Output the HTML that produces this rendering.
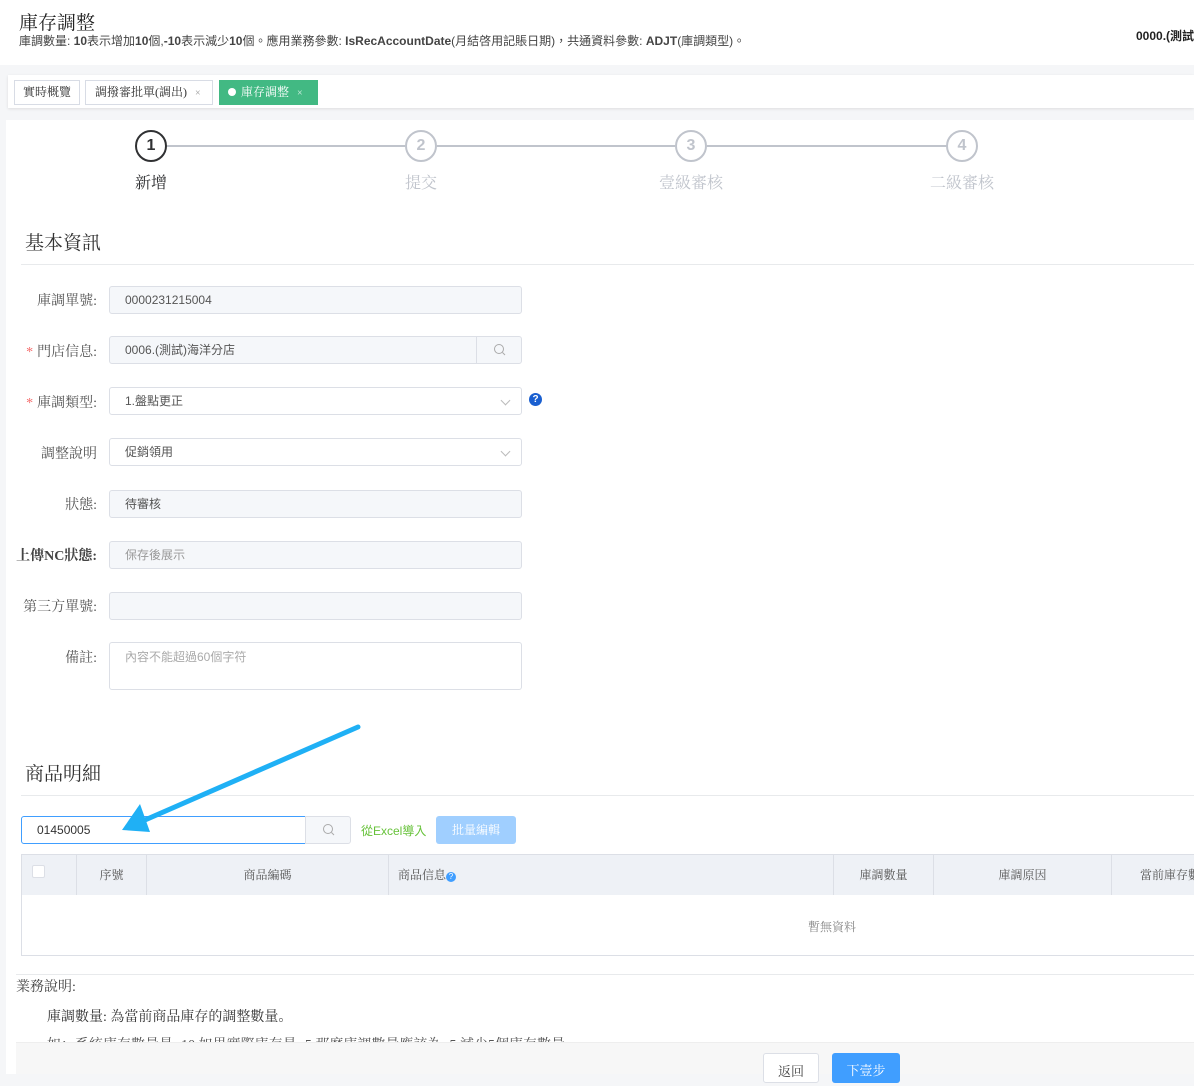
<!DOCTYPE html>
<html><head><meta charset="utf-8"><style>
*{box-sizing:border-box;margin:0;padding:0}
body{width:1194px;height:1074px;overflow:hidden;background:#f5f6f8;font-family:"Liberation Sans","Noto Sans CJK TC",sans-serif;color:#333;position:relative}
.a{position:absolute}
.sf{font-family:"Liberation Serif","Noto Serif CJK SC",serif}
.inp{position:absolute;left:109px;width:413px;height:28px;border:1px solid #dcdfe6;border-radius:3px;background:#f5f7fa;font-size:12px;color:#555;padding-left:15px;line-height:26px}
.lbl{position:absolute;right:1097px;font-size:14px;color:#555;white-space:nowrap;font-family:"Liberation Serif","Noto Serif CJK SC",serif}
.lbl b{color:#f56c6c;font-weight:normal;margin-right:4px}
.th{position:absolute;top:855px;height:40px;border-right:1px solid #dcdfe6;font-size:12px;color:#555;line-height:40px;text-align:center;font-family:"Liberation Serif","Noto Serif CJK SC",serif}
.arr{position:absolute;right:12px;top:9px;width:7px;height:7px;border-right:1px solid #bbb;border-bottom:1px solid #bbb;transform:rotate(45deg)}
</style></head><body>
<div class="a" style="left:0;top:0;width:1194px;height:65px;background:#fff"></div>
<div class="a sf" style="left:19px;top:8px;font-size:19px;color:#222">庫存調整</div>
<div class="a" style="left:19px;top:32px;font-size:12px;color:#444;white-space:nowrap">庫調數量: <b>10</b>表示增加<b>10</b>個,<b>-10</b>表示減少<b>10</b>個。應用業務參數: <b>IsRecAccountDate</b>(月結啓用記賬日期)，共通資料參數: <b>ADJT</b>(庫調類型)。</div>
<div class="a" style="left:1136px;top:27px;font-size:12px;font-weight:bold;color:#222;white-space:nowrap">0000.(測試</div>
<div class="a" style="left:8px;top:75px;width:1186px;height:33px;background:#fff;box-shadow:0 1px 3px rgba(0,0,0,.1)"></div>
<div class="a sf" style="left:14px;top:80px;width:66px;height:25px;border:1px solid #d8dce5;font-size:12px;line-height:23px;text-align:center;background:#fff">實時概覽</div>
<div class="a sf" style="left:85px;top:80px;width:128px;height:25px;border:1px solid #d8dce5;font-size:12px;line-height:23px;padding-left:9px;background:#fff">調撥審批單(調出) <span style="color:#999;font-size:10px;margin-left:5px">×</span></div>
<div class="a sf" style="left:219px;top:80px;width:99px;height:25px;background:#42b983;color:#fff;font-size:12px;line-height:25px;padding-left:9px"><span style="display:inline-block;width:8px;height:8px;border-radius:50%;background:#fff;margin-right:5px"></span>庫存調整 <span style="font-size:10px;margin-left:5px;opacity:.8">×</span></div>
<div class="a" style="left:6px;top:120px;width:1188px;height:954px;background:#fff"></div>
<div class="a" style="left:167px;top:145px;width:238px;height:2px;background:#c0c4cc"></div>
<div class="a" style="left:437px;top:145px;width:238px;height:2px;background:#c0c4cc"></div>
<div class="a" style="left:707px;top:145px;width:240px;height:2px;background:#c0c4cc"></div>
<div class="a" style="left:135px;top:130px;width:32px;height:32px;border:2px solid #303133;border-radius:50%;text-align:center;line-height:28px;font-size:16px;font-weight:bold;color:#303133">1</div>
<div class="a" style="left:405px;top:130px;width:32px;height:32px;border:2px solid #c0c4cc;border-radius:50%;text-align:center;line-height:28px;font-size:16px;font-weight:bold;color:#c0c4cc">2</div>
<div class="a" style="left:675px;top:130px;width:32px;height:32px;border:2px solid #c0c4cc;border-radius:50%;text-align:center;line-height:28px;font-size:16px;font-weight:bold;color:#c0c4cc">3</div>
<div class="a" style="left:946px;top:130px;width:32px;height:32px;border:2px solid #c0c4cc;border-radius:50%;text-align:center;line-height:28px;font-size:16px;font-weight:bold;color:#c0c4cc">4</div>
<div class="a sf" style="left:135px;top:170px;font-size:16px;color:#303133">新增</div>
<div class="a sf" style="left:405px;top:170px;font-size:16px;color:#c0c4cc">提交</div>
<div class="a sf" style="left:659px;top:170px;font-size:16px;color:#c0c4cc">壹級審核</div>
<div class="a sf" style="left:930px;top:170px;font-size:16px;color:#c0c4cc">二級審核</div>
<div class="a sf" style="left:25px;top:228px;font-size:19px;color:#333">基本資訊</div>
<div class="a" style="left:21px;top:264px;width:1173px;height:1px;background:#e8eaec"></div>
<div class="lbl" style="top:290px">庫調單號:</div><div class="inp" style="top:286px">0000231215004</div>
<div class="lbl" style="top:341px"><b>*</b>門店信息:</div><div class="inp" style="top:336px">0006.(測試)海洋分店<span class="a" style="right:0;top:0;width:45px;height:26px;border-left:1px solid #dcdfe6"><svg width="45" height="26"><circle cx="22" cy="12" r="4.5" fill="none" stroke="#aaa" stroke-width="1"/><line x1="25.5" y1="15.5" x2="28" y2="18" stroke="#aaa"/></svg></span></div>
<div class="lbl" style="top:392px"><b>*</b>庫調類型:</div><div class="inp" style="top:387px;background:#fff">1.盤點更正<span class="arr"></span></div>
<div class="a" style="left:529px;top:393px;width:13px;height:13px;border-radius:50%;background:#1a5fd0;color:#fff;font-size:10px;text-align:center;line-height:13px;font-weight:bold">?</div>
<div class="lbl" style="top:443px">調整說明</div><div class="inp" style="top:438px;background:#fff">促銷領用<span class="arr"></span></div>
<div class="lbl" style="top:494px">狀態:</div><div class="inp" style="top:490px">待審核</div>
<div class="lbl" style="top:545px;font-weight:bold;color:#444">上傳NC狀態:</div><div class="inp" style="top:541px;color:#999">保存後展示</div>
<div class="lbl" style="top:596px">第三方單號:</div><div class="inp" style="top:592px"></div>
<div class="lbl" style="top:647px">備註:</div><div class="inp" style="top:642px;height:48px;background:#fff;color:#aaa;line-height:28px">內容不能超過60個字符</div>
<div class="a sf" style="left:25px;top:759px;font-size:19px;color:#333">商品明細</div>
<div class="a" style="left:21px;top:795px;width:1173px;height:1px;background:#e8eaec"></div>
<div class="a" style="left:21px;top:816px;width:285px;height:28px;border:1px solid #409eff;border-radius:3px 0 0 3px;font-size:12px;line-height:26px;padding-left:15px;color:#333">01450005</div>
<div class="a" style="left:305px;top:816px;width:46px;height:28px;border:1px solid #dcdfe6;background:#f5f7fa;border-radius:0 3px 3px 0"><svg width="44" height="26"><circle cx="22" cy="12" r="4.5" fill="none" stroke="#aaa" stroke-width="1"/><line x1="25.5" y1="15.5" x2="28" y2="18" stroke="#aaa"/></svg></div>
<div class="a" style="left:361px;top:822px;font-size:12px;color:#67c23a">從Excel導入</div>
<div class="a sf" style="left:436px;top:816px;width:80px;height:28px;background:#a0cfff;border-radius:3px;color:#fff;font-size:12px;text-align:center;line-height:28px">批量編輯</div>
<div class="a" style="left:21px;top:854px;width:1173px;height:102px;border:1px solid #dcdfe6;border-right:none"></div>
<div class="a" style="left:22px;top:855px;width:1172px;height:40px;background:#eef1f6"></div>
<div class="th" style="left:22px;width:55px;text-align:left;padding-left:10px"><span style="display:inline-block;width:13px;height:13px;border:1px solid #dcdfe6;background:#fff;border-radius:2px;margin-top:10px;vertical-align:top"></span></div>
<div class="th" style="left:77px;width:70px">序號</div>
<div class="th" style="left:147px;width:242px">商品編碼</div>
<div class="th" style="left:389px;width:445px;text-align:left;padding-left:9px">商品信息<span style="display:inline-block;width:10px;height:10px;border-radius:50%;background:#409eff;color:#fff;font-size:8px;line-height:10px;text-align:center;font-family:'Liberation Sans'">?</span></div>
<div class="th" style="left:834px;width:100px">庫調數量</div>
<div class="th" style="left:934px;width:178px">庫調原因</div>
<div class="th" style="left:1112px;width:100px;border:none;text-align:left;padding-left:28px;white-space:nowrap">當前庫存數</div>
<div class="a sf" style="left:808px;top:918px;font-size:12px;color:#888">暫無資料</div>
<div class="a" style="left:16px;top:974px;width:1178px;height:1px;background:#e8eaec"></div>
<div class="a sf" style="left:16px;top:976px;font-size:14px;color:#444">業務說明:</div>
<div class="a sf" style="left:47px;top:1006px;font-size:14px;color:#333">庫調數量: 為當前商品庫存的調整數量。</div>
<div class="a sf" style="left:47px;top:1034px;font-size:14px;color:#555;white-space:nowrap">如：系統庫存數量是 -10,如果實際庫存是 -5,那麼庫調數量應該為 -5,減少5個庫存數量</div>
<div class="a" style="left:16px;top:1042px;width:1178px;height:32px;background:#f7f7f7;border-top:1px solid #eee"></div>
<div class="a sf" style="left:763px;top:1053px;width:56px;height:30px;border:1px solid #dcdfe6;border-radius:3px;background:#fff;font-size:13px;text-align:center;line-height:28px;color:#444;padding-top:4px">返回</div>
<div class="a sf" style="left:832px;top:1053px;width:68px;height:30px;background:#409eff;border-radius:3px;font-size:13px;text-align:center;line-height:28px;color:#fff;padding-top:4px">下壹步</div>
<svg class="a" style="left:0;top:0" width="1194" height="1074"><line x1="358" y1="727" x2="145" y2="820" stroke="#1fb0f5" stroke-width="5" stroke-linecap="round"/><polygon points="122,830 140,804 150,832" fill="#1fb0f5"/></svg>
</body></html>
